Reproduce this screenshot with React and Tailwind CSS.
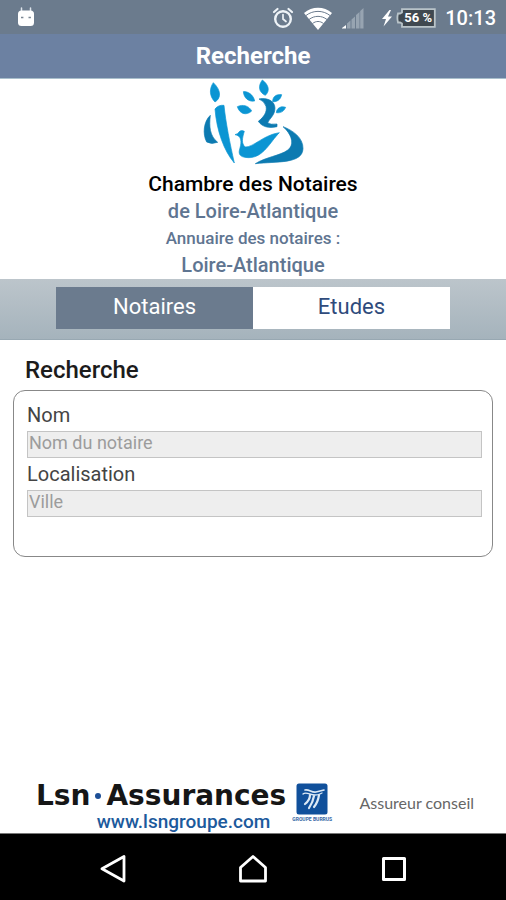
import { useState } from "react";

function StatusBar() {
  return (
    <div className="flex h-[34px] items-center bg-[#6b7b8d] pl-[17px] pr-[10px] pt-px text-white">
      <svg className="h-6 w-[18px]" viewBox="0 0 18 24" aria-label="Android">
        <path d="M4.500 2v6M13.500 2v6" stroke="#dde4eb" strokeWidth="1.500" strokeLinecap="round" />
        <rect x="1" y="4.500" width="16" height="15.500" rx="3.500" fill="#fff" />
        <path d="M4 11.500h2.400M11.500 11.500h2.400" stroke="#7b8794" strokeWidth="1.500" />
      </svg>
      <div className="ml-auto flex items-center">
        <svg className="h-6 w-[22px]" viewBox="0 0 22 24" fill="none" stroke="#eef3f7" strokeLinecap="round" aria-label="Alarme">
          <circle cx="11" cy="13" r="7.800" strokeWidth="2.400" />
          <path d="M11 8.500V13l3 2.500" strokeWidth="1.700" />
          <path d="M2 6 5.500 3M20 6 16.500 3" strokeWidth="2.200" />
        </svg>
        <svg className="ml-[10px] h-6 w-7" viewBox="0 0 28 24" aria-label="Wi-Fi">
          <path d="M0 7C8 0 20 0 28 7L14 24Z" fill="#fff" />
          <path d="M2 9.500c7-5.500 17-5.500 24 0M5 13.500c5.500-4.200 12.500-4.200 18 0M8.500 17.500c3.600-2.700 7.400-2.700 11 0" fill="none" stroke="#6b7b8d" strokeWidth="1" />
        </svg>
        <svg className="ml-[10px] h-6 w-[22px]" viewBox="0 0 22 24" aria-label="Réseau">
          <path d="M0 22.500h4V19L0 22Z" fill="#fff" />
          <path d="M5 22.500V17.500l3.500-3V22.500ZM9.500 22.500v-9l3.500-3V22.500ZM14 22.500V9l3.500-3V22.500ZM18.200 22.500V5L21.500 2v20.500Z" fill="#97a4b1" />
        </svg>
        <svg className="ml-[17px] h-6 w-3" viewBox="0 0 12 24" aria-label="En charge">
          <path d="M8.500 4 1 13h4L2.500 20.500 11 10.500H7L10 4Z" fill="#fff" />
        </svg>
        <div className="relative ml-[3px] h-5 w-10">
          <svg className="absolute inset-0 h-5 w-10" viewBox="0 0 40 20" aria-hidden="true">
            <path d="M6 1.200H38.800V18.800H6V15.500L4 14.500H2Q.8 10 2 5.500H4L6 4.500Z" fill="#3f4850" stroke="#b9c4c9" strokeWidth="1.800" />
          </svg>
          <span className="relative block pl-1 text-center text-[13px] font-bold leading-5">56 %</span>
        </div>
        <time className="ml-[9px] text-[20px] font-medium leading-6">10:13</time>
      </div>
    </div>
  );
}

function Emblem() {
  return (
    <svg className="h-[86px] w-[126px] shrink-0" viewBox="0 15 378 258" aria-label="Chambre des Notaires">
      <g fill="#0b95d3" stroke="#0b95d3" strokeWidth="2" strokeLinejoin="round">
        <path d="M70 26C58 43 57 66 75 84C93 73 95 50 70 26Z" />
        <path d="M75 105Q85 92 102 94C107 145 120 209 133 267C102 231 80 170 75 105Z" />
        <path d="M217 18C204 35 205 54 226 64C241 50 236 32 217 18Z" />
        <path d="M160 53C173 51 190 62 194 81C176 84 162 73 160 53Z" />
        <path d="M142 98C158 90 177 95 185 111C169 126 149 120 142 98Z" />
        <path d="M275 62C257 60 248 69 248 83C262 84 272 76 275 62Z" />
        <path d="M287 100C273 95 260 102 259 116C272 118 282 112 287 100Z" />
        <path d="M135 182Q143 181 150 171Q157 168 163 172C157 191 153 209 166 219C190 220 222 182 268 176C241 203 220 252 175 251C145 250 145 237 150 222C155 203 155 185 135 182Z" />
      </g>
      <g fill="#0c7ab1" stroke="#0c7ab1" strokeWidth="2" strokeLinejoin="round">
        <path d="M61 124C41 142 37 180 50 204Q64 212 83 205C59 186 57 157 61 124Z" />
        <path d="M207 75C238 69 260 86 254 111C251 126 239 134 233 146Q241 153 261 150L261 158C235 164 216 158 205 142C222 129 232 113 228 97Q223 81 207 75Z" />
        <path d="M279 158C308 169 340 191 339 224C337 270 262 262 196 269C225 250 272 244 292 229C317 211 303 179 279 158Z" />
      </g>
    </svg>
  );
}

function Tab({ active, onClick, children }) {
  return (
    <button
      type="button"
      aria-pressed={active}
      onClick={onClick}
      className={
        "flex-1 pb-[2px] text-[22px] leading-7 " +
        (active ? "bg-[#6b7b8e] text-white" : "bg-white text-[#2f4b7c]")
      }
    >
      {children}
    </button>
  );
}

function Field({ id, label, placeholder }) {
  return (
    <div>
      <label htmlFor={id} className="block text-[20px] leading-8 text-[#444]">
        {label}
      </label>
      <input
        id={id}
        type="text"
        placeholder={placeholder}
        className="block h-[27px] w-full border border-[#c4c4c4] bg-[#eee] px-px pb-1 text-[18px] text-[#444] outline-none placeholder:text-[#9c9c9c]"
      />
    </div>
  );
}

function Sponsor() {
  return (
    <a href="#lsn" className="flex h-14 items-start overflow-hidden pl-9 pr-8">
      <div className="pt-[5px]">
        <div className="flex items-center whitespace-nowrap font-['DejaVu_Sans'] text-[28px] font-bold leading-7 text-[#161616]">
          Lsn
          <span className="mx-[5px] h-[6px] w-[6px] rounded-full bg-[#1d4f96]" />
          Assurances
        </div>
        <div className="pr-4 text-right text-[19px] font-medium leading-6 text-[#1c5a9c]">www.lsngroupe.com</div>
      </div>
      <div className="ml-[6px] flex flex-col items-center pt-[6px]">
        <svg className="h-8 w-8" viewBox="0 0 32 32" aria-label="LSN">
          <rect x="0.500" y="0.500" width="31" height="31" rx="2.500" fill="#10509b" />
          <g fill="none" stroke="#dce9f6" strokeLinecap="round">
            <path d="M9 7C13 6 16 10 20 9S24 8 28 7" strokeWidth="1.600" />
            <path d="M7 11C10 8 14 12 19 12S23 11 26 10" strokeWidth="1.300" />
            <path d="M14 12Q14 17 9 21M18 13Q17 19 13 25M23 12Q22 19 18 24" strokeWidth="2.200" />
          </g>
        </svg>
        <span className="whitespace-nowrap text-[5px] font-bold leading-2 text-[#3566a4]">GROUPE BURRUS</span>
      </div>
      <span className="ml-auto whitespace-nowrap pt-[14px] font-['Lato'] text-[16px] leading-6 text-[#666]">Assureur conseil</span>
    </a>
  );
}

function NavigationBar() {
  return (
    <nav className="flex h-[67px] items-center justify-between border-t border-[#777] bg-black px-[99px] pt-1">
      <button type="button" aria-label="Retour">
        <svg className="h-7 w-7" viewBox="0 0 28 28" fill="none" stroke="#fff" strokeWidth="2.800" strokeLinejoin="round">
          <path d="M25 1.500V26L3 13.800Z" />
        </svg>
      </button>
      <button type="button" aria-label="Accueil">
        <svg className="h-7 w-7" viewBox="0 0 28 28" fill="none" stroke="#fff" strokeWidth="2.800" strokeLinejoin="round">
          <path d="M1.500 26V12.500L14 1.500l12.500 11V26Z" />
        </svg>
      </button>
      <button type="button" aria-label="Applications récentes">
        <svg className="h-7 w-7" viewBox="0 0 28 28" fill="none" stroke="#fff" strokeWidth="3" strokeLinejoin="round">
          <rect x="4.500" y="3.500" width="21" height="21" />
        </svg>
      </button>
    </nav>
  );
}

export default function App() {
  const [tab, setTab] = useState("notaires");
  return (
    <div className="flex min-h-screen flex-col bg-white font-['Roboto',sans-serif]">
      <StatusBar />
      <header className="h-[45px] border-b border-[#a9bfcc] bg-[#6c81a2] text-center text-white">
        <h1 className="text-[24px] font-bold leading-[44px]">Recherche</h1>
      </header>

      <section className="flex flex-col items-center text-center font-medium text-[#5f7591]">
        <Emblem />
        <p className="mt-[6px] text-[21px] leading-[27px] text-black">Chambre des Notaires</p>
        <p className="text-[20px] leading-[27px]">de Loire-Atlantique</p>
        <p className="text-[17px] leading-[27px]">Annuaire des notaires :</p>
        <p className="text-[20px] leading-[27px]">Loire-Atlantique</p>
      </section>

      <div className="h-[61px] border-b border-[#98a8b2] bg-linear-to-b from-[#bcc5cb] to-[#a5b3bc] px-14 pt-2 pb-[10px]">
        <div className="flex h-[42px]">
          <Tab active={tab === "notaires"} onClick={() => setTab("notaires")}>Notaires</Tab>
          <Tab active={tab === "etudes"} onClick={() => setTab("etudes")}>Etudes</Tab>
        </div>
      </div>

      <main className="flex-1 px-[13px] pt-4">
        <h2 className="px-3 text-[24px] font-medium leading-7 text-[#1c1c1c]">Recherche</h2>
        <form className="mt-[6px] h-[167px] rounded-xl border border-[#888] pl-[13px] pr-[10px] pt-2" onSubmit={(e) => e.preventDefault()}>
          <Field id="nom" label="Nom" placeholder="Nom du notaire" />
          <Field id="ville" label="Localisation" placeholder="Ville" />
        </form>
      </main>

      <Sponsor />
      <NavigationBar />
    </div>
  );
}
